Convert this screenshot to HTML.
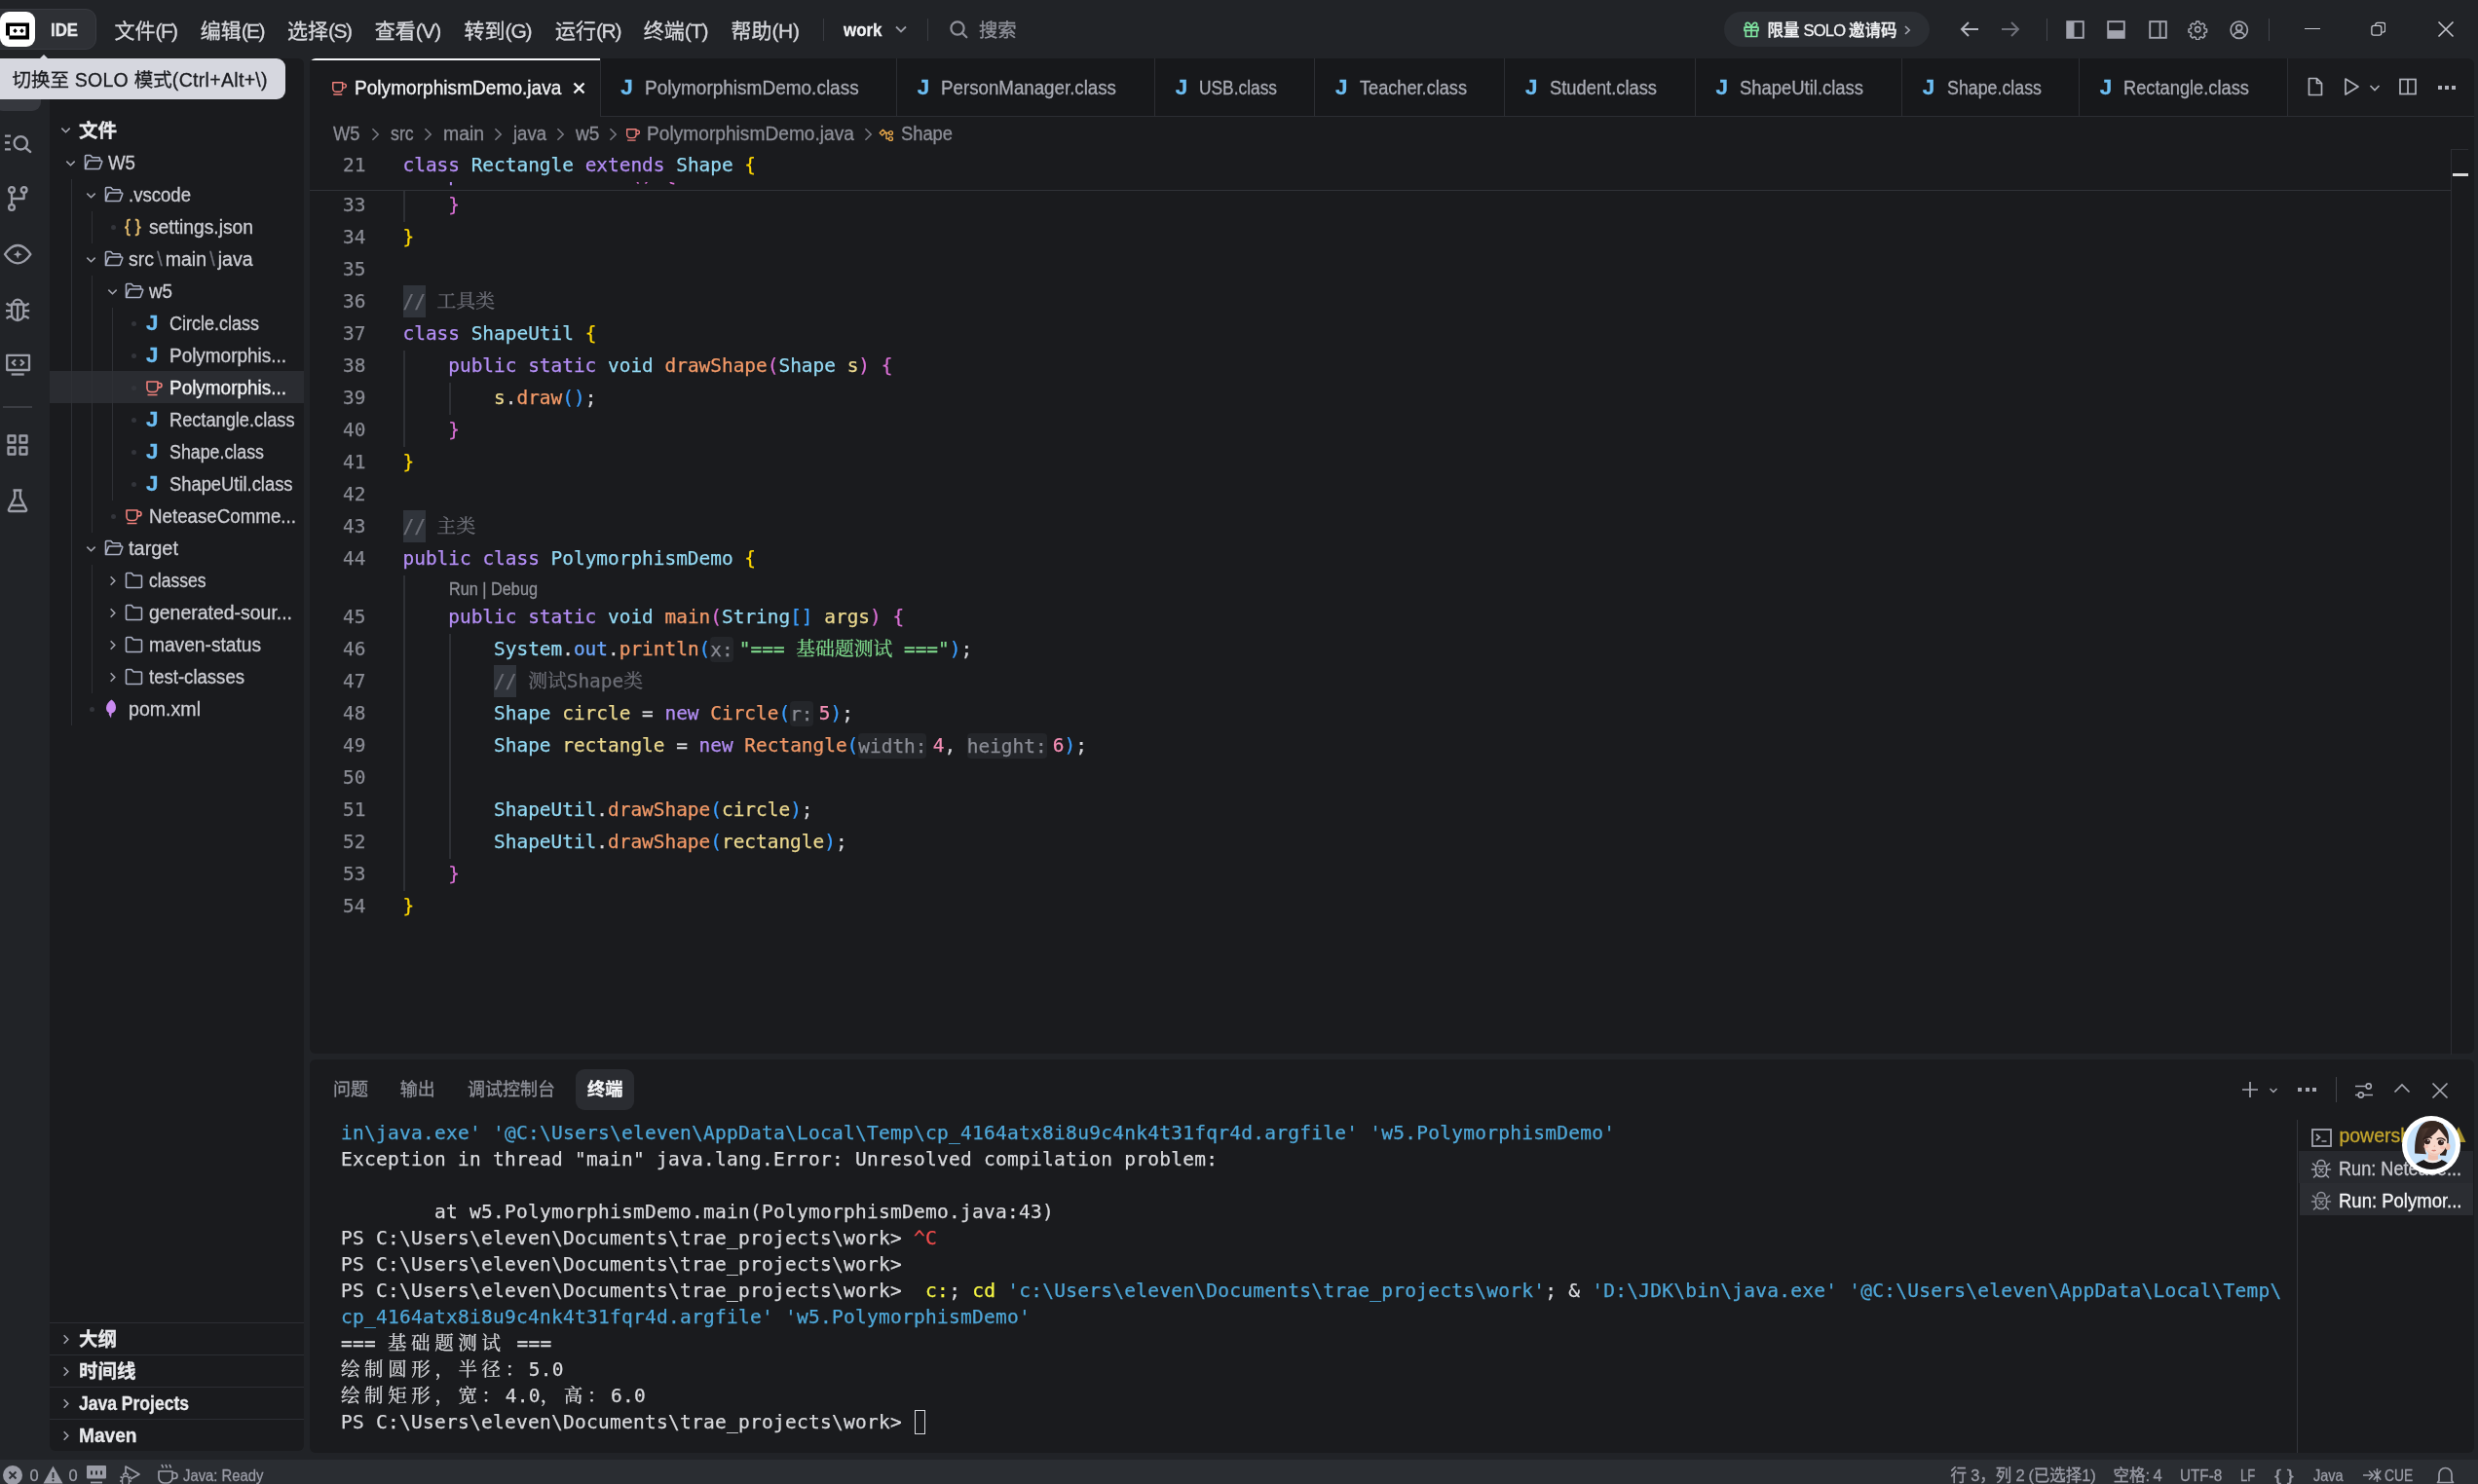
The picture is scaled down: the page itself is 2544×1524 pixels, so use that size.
<!DOCTYPE html>
<html lang="zh-CN"><head><meta charset="utf-8"><title>PolymorphismDemo.java - work - Trae</title>
<style>

html,body{margin:0;padding:0}
body{width:2544px;height:1524px;overflow:hidden;background:#212327;position:relative;
 font-family:"Liberation Sans","Noto Sans CJK SC",sans-serif;font-size:19.5px;color:#d2d3d9}
#root{position:absolute;left:0;top:0;width:2544px;height:1524px;overflow:hidden;will-change:transform}
.t{position:absolute;white-space:pre;display:block;-webkit-text-stroke:0.3px}
.b{font-weight:700}
.mono{font-family:"DejaVu Sans Mono","Liberation Mono","Noto Serif CJK SC",monospace}
.pane{position:absolute;background:#1a1b1e;border-radius:6px;overflow:hidden}
.hl{position:absolute;background:#2c2e33;height:1px}
.vl{position:absolute;background:#2c2e33;width:1px}
/* title */
.menu{color:#d6d7dc;font-size:21px}
.dim{color:#8e9099}
/* tree */
.tr{color:#cdced4}
.w{color:#f2f3f5}
.J{color:#6cbdf2;font-weight:700;font-size:22.5px}
.bs{color:#6f717a;margin:0 3.2px}
/* code colours */
.k{color:#b48ef5}.c{color:#93d9f3}.f{color:#f39a68}.v{color:#ebd88e}.s{color:#7fd98c}.n{color:#f48fb6}
.o{color:#d7d8dd}.m{color:#6d6f77}.b1{color:#ffd700}.b2{color:#da70d6}.b3{color:#3b9eff}.fl{color:#6ea8fe}
.ln{color:#8a8c95}
.cjk{font-family:"Noto Serif CJK SC",serif;line-height:0;font-size:19.8px}
.code{position:absolute;left:413.5px;white-space:pre;font-family:"DejaVu Sans Mono","Liberation Mono",monospace;font-size:19.43px;height:33px;line-height:33px;color:#d7d8dd;-webkit-text-stroke:0.25px}
.num{position:absolute;left:318px;width:57.5px;text-align:right;font-family:"DejaVu Sans Mono","Liberation Mono",monospace;font-size:19.43px;height:33px;line-height:33px;color:#8a8c95;-webkit-text-stroke:0.25px}
.hint{background:#24262a;color:#8a8c95;border-radius:4px;padding:1.7px 0;margin-right:6.2px}
.sel{background:#30343b;display:inline-block;height:33px;line-height:33px;vertical-align:top}
.term{position:absolute;left:350px;white-space:pre;font-family:"DejaVu Sans Mono","Liberation Mono",monospace;font-size:19.5px;letter-spacing:0.262px;height:27px;line-height:27px;color:#d9dade;-webkit-text-stroke:0.25px}
.tb{color:#4ea7d8}.ty{color:#f5f543}.tr2{color:#f14c4c}
.tc{font-family:"Noto Serif CJK SC",serif;letter-spacing:4.6px;line-height:0}

</style></head>
<body>
<div id="root">
<!-- title bar -->
<div class="" style="position:absolute;left:-12.0px;top:9.0px;width:111.0px;height:42.0px;background:#2e3035;border:1px solid #393b41;border-radius:11px;box-sizing:border-box"></div>
<div class="" style="position:absolute;left:0.0px;top:12.0px;width:36.0px;height:36.0px;background:#fff;border-radius:9px"></div>
<svg style="position:absolute;left:0.0px;top:12.0px;" width="36" height="36" viewBox="0 0 36 36" fill="none"><path fill-rule="evenodd" d="M6 11.600H30V28.500H9.400V24.600H6zM10 15H26.400V24.400H10z" fill="#000"/><path d="M15.500 17.300l2.300 2.400-2.300 2.400-2.300-2.400zM22.400 17.300l2.300 2.400-2.300 2.400-2.300-2.400z" fill="#000"/></svg>
<span id="t1" class="t b" style="left:52.0px;top:13.8px;height:34px;line-height:34px;transform:scaleX(0.9328);transform-origin:0 50%;color:#e8e9ec;font-size:18px">IDE</span>
<span id="t2" class="t menu" style="left:117.5px;top:15.3px;height:34px;line-height:34px;">文件<span style="letter-spacing:-1.609px">(F)</span></span>
<span id="t3" class="t menu" style="left:205.8px;top:15.3px;height:34px;line-height:34px;">编辑<span style="letter-spacing:-1.667px">(E)</span></span>
<span id="t4" class="t menu" style="left:295.0px;top:15.3px;height:34px;line-height:34px;">选择<span style="letter-spacing:-1.500px">(S)</span></span>
<span id="t5" class="t menu" style="left:384.8px;top:15.3px;height:34px;line-height:34px;">查看<span style="letter-spacing:-0.833px">(V)</span></span>
<span id="t6" class="t menu" style="left:476.5px;top:15.3px;height:34px;line-height:34px;">转到<span style="letter-spacing:-1.109px">(G)</span></span>
<span id="t7" class="t menu" style="left:570.0px;top:15.3px;height:34px;line-height:34px;">运行<span style="letter-spacing:-1.385px">(R)</span></span>
<span id="t8" class="t menu" style="left:660.7px;top:15.3px;height:34px;line-height:34px;">终端<span style="letter-spacing:-0.943px">(T)</span></span>
<span id="t9" class="t menu" style="left:750.5px;top:15.3px;height:34px;line-height:34px;">帮助<span style="letter-spacing:-0.385px">(H)</span></span>
<div class="" style="position:absolute;left:845.0px;top:19.0px;width:1.0px;height:23.0px;background:#3a3c42"></div>
<span id="t10" class="t b" style="left:865.5px;top:14.2px;height:34px;line-height:34px;transform:scaleX(0.9401);transform-origin:0 50%;color:#f0f1f3;font-size:18px">work</span>
<svg style="position:absolute;left:917.5px;top:23.0px;" width="14" height="14" viewBox="0 0 14 14" fill="none"><path d="M2 4.5l5 5 5-5" stroke="#9a9ca6" stroke-width="1.8"/></svg>
<div class="" style="position:absolute;left:952.0px;top:19.0px;width:1.0px;height:23.0px;background:#3a3c42"></div>
<svg style="position:absolute;left:974.0px;top:20.0px;" width="20" height="20" viewBox="0 0 20 20" fill="none"><circle cx="9" cy="9" r="6.6" stroke="#8e9099" stroke-width="2.2"/><path d="M14 14l4.3 4.3" stroke="#8e9099" stroke-width="2.2" stroke-linecap="round"/></svg>
<span id="t11" class="t dim" style="left:1005.0px;top:14.0px;height:34px;line-height:34px;transform:scaleX(0.9893);transform-origin:0 50%;font-size:19.5px">搜索</span>
<div class="" style="position:absolute;left:1770.0px;top:12.0px;width:211.0px;height:36.0px;background:#2b2e33;border-radius:18px"></div>
<svg style="position:absolute;left:1788.3px;top:20.0px;" width="20" height="20" viewBox="0 0 20 20" fill="none"><path d="M3 8.2h14v3.2H3zM4.3 11.4v6.1h11.4v-6.1M10 8.2v9.3" stroke="#7fe3a0" stroke-width="1.7" stroke-linejoin="round"/><path d="M10 8c-1-3-2.4-4.6-3.9-4.6-1.2 0-1.9.9-1.9 2 0 1.500 1.300 2.600 5.800 2.600zM10 8c1-3 2.4-4.6 3.900-4.600 1.200 0 1.900.9 1.900 2 0 1.500-1.300 2.600-5.800 2.600z" stroke="#7fe3a0" stroke-width="1.6"/></svg>
<span id="t12" class="t " style="left:1814.6px;top:14.2px;height:34px;line-height:34px;color:#f2f3f5;font-size:16.5px;font-weight:500">限量<span style="letter-spacing:-0.755px"> SOLO </span>邀请码</span>
<svg style="position:absolute;left:1952.0px;top:24.5px;" width="12" height="12" viewBox="0 0 12 12" fill="none"><path d="M4 2l4.2 4L4 10" stroke="#a2a4ae" stroke-width="1.7"/></svg>
<svg style="position:absolute;left:2010.0px;top:18.0px;" width="24" height="24" viewBox="0 0 24 24" fill="none"><path d="M21 12H4.5M11 5l-7 7 7 7" stroke="#b4b6bf" stroke-width="2"/></svg>
<svg style="position:absolute;left:2052.0px;top:18.0px;" width="24" height="24" viewBox="0 0 24 24" fill="none"><path d="M3 12h16.5M13 5l7 7-7 7" stroke="#6f717a" stroke-width="2"/></svg>
<div class="" style="position:absolute;left:2100.5px;top:18.5px;width:1.2px;height:23.0px;background:#43454c"></div>
<svg style="position:absolute;left:2121.0px;top:21.0px;" width="19" height="19" viewBox="0 0 19 19" fill="none"><rect x="1.2" y="1.2" width="16.600" height="16.600" stroke="#a2a4ae" stroke-width="1.9"/><rect x="1.2" y="1.2" width="7.3" height="16.600" fill="#a2a4ae"/></svg>
<svg style="position:absolute;left:2163.2px;top:21.0px;" width="19" height="19" viewBox="0 0 19 19" fill="none"><rect x="1.2" y="1.2" width="16.600" height="16.600" stroke="#a2a4ae" stroke-width="1.9"/><rect x="1.2" y="10.2" width="16.600" height="7.6" fill="#a2a4ae"/></svg>
<svg style="position:absolute;left:2205.5px;top:21.0px;" width="19" height="19" viewBox="0 0 19 19" fill="none"><rect x="1.2" y="1.2" width="16.600" height="16.600" stroke="#a2a4ae" stroke-width="1.9"/><path d="M11.600 1.2v16.600" stroke="#a2a4ae" stroke-width="1.9"/></svg>
<svg style="position:absolute;left:2246.2px;top:20.2px;" width="20.5" height="20.5" viewBox="0 0 24 24" fill="none"><circle cx="12" cy="12" r="3.1" stroke="#a2a4ae" stroke-width="1.9"/><path d="M10.3 2.5h3.4l.6 2.6 1.700.8 2.400-1.300 2.400 2.400-1.300 2.400.8 1.700 2.600.6v3.400l-2.600.6-.8 1.700 1.300 2.400-2.400 2.400-2.400-1.300-1.700.8-.6 2.600h-3.400l-.6-2.600-1.700-.8-2.400 1.300-2.400-2.400 1.300-2.400-.8-1.700-2.600-.6v-3.400l2.600-.6.8-1.700-1.300-2.400 2.400-2.400 2.400 1.300 1.700-.8z" stroke="#a2a4ae" stroke-width="1.8" stroke-linejoin="round"/></svg>
<svg style="position:absolute;left:2287.9px;top:19.8px;" width="21.5" height="21.5" viewBox="0 0 24 24" fill="none"><circle cx="12" cy="12" r="9.6" stroke="#a2a4ae" stroke-width="1.9"/><circle cx="12" cy="9.6" r="3.4" stroke="#a2a4ae" stroke-width="1.9"/><path d="M5.6 18.6c1.200-3 3.600-4.300 6.400-4.300s5.200 1.300 6.400 4.300" stroke="#a2a4ae" stroke-width="1.9"/></svg>
<div class="" style="position:absolute;left:2329.0px;top:18.5px;width:1.2px;height:23.0px;background:#43454c"></div>
<div class="" style="position:absolute;left:2365.5px;top:28.5px;width:16.0px;height:1.6px;background:#c4c6cd"></div>
<svg style="position:absolute;left:2433.8px;top:22.2px;" width="15.5" height="15.5" viewBox="0 0 18 18" fill="none"><rect x="1" y="5" width="11.500" height="11.500" rx="2.500" stroke="#c4c6cd" stroke-width="1.5"/><path d="M5.5 4.8V4a2.500 2.500 0 0 1 2.500-2.500h6.500a2.500 2.500 0 0 1 2.500 2.500v6.500a2.500 2.500 0 0 1-2.500 2.500h-1.300" stroke="#c4c6cd" stroke-width="1.5"/></svg>
<svg style="position:absolute;left:2502.0px;top:21.0px;" width="18" height="18" viewBox="0 0 18 18" fill="none"><path d="M1.5 1.500l15 15M16.500 1.500l-15 15" stroke="#c4c6cd" stroke-width="1.6"/></svg>
<!-- tooltip -->
<svg style="position:absolute;left:40.0px;top:55.5px;z-index:30" width="10" height="5" viewBox="0 0 10 5" fill="none"><path d="M0 5L5 0 10 5z" fill="#d6d7df"/></svg>
<div class="" style="position:absolute;left:-10.0px;top:60.0px;width:303.0px;height:42.0px;background:#d6d7df;border-radius:9px;z-index:30"></div>
<span id="t13" class="t " style="left:12.4px;top:64.5px;height:34px;line-height:34px;color:#1b1c20;z-index:31;font-size:19.5px">切换至<span style="letter-spacing:0.315px"> SOLO </span>模式<span style="letter-spacing:0.315px">(Ctrl+Alt+\)</span></span>
<!-- activity bar -->
<div class="" style="position:absolute;left:-6.0px;top:66.0px;width:48.0px;height:48.0px;background:#36383e;border-radius:9px"></div>
<svg style="position:absolute;left:3.0px;top:132.0px;" width="30" height="30" viewBox="0 0 30 30" fill="none"><path d="M2 7.600h6M2 14.500h5M2 21.300h6" stroke="#9c9ea8" stroke-width="2.3" stroke-linejoin="round"/><circle cx="18.300" cy="14.800" r="6.700" stroke="#9c9ea8" stroke-width="2.3" stroke-linejoin="round"/><path d="M23.200 19.800l5 4.200" stroke="#9c9ea8" stroke-width="2.3" stroke-linejoin="round" stroke-linecap="round"/></svg>
<svg style="position:absolute;left:3.0px;top:189.0px;" width="30" height="30" viewBox="0 0 30 30" fill="none"><circle cx="9" cy="6" r="2.900" stroke="#9c9ea8" stroke-width="2.3" stroke-linejoin="round"/><circle cx="21.600" cy="6" r="2.900" stroke="#9c9ea8" stroke-width="2.3" stroke-linejoin="round"/><circle cx="9" cy="24" r="2.900" stroke="#9c9ea8" stroke-width="2.3" stroke-linejoin="round"/><path d="M9 8.900v12.200M21.600 8.900V15H9" stroke="#9c9ea8" stroke-width="2.3" stroke-linejoin="round"/></svg>
<svg style="position:absolute;left:3.0px;top:246.0px;" width="30" height="30" viewBox="0 0 30 30" fill="none"><path d="M2 15.200C6 9.200 10.500 6 15.200 6s9.200 3.200 13.200 9.200c-4 6-8.500 9.200-13.200 9.200S6 21.200 2 15.200z" stroke="#9c9ea8" stroke-width="2.3" stroke-linejoin="round"/><path d="M15.200 10.700l1.300 3.200 3.200 1.300-3.200 1.300-1.300 3.200-1.300-3.200-3.200-1.300 3.200-1.300z" fill="#9c9ea8"/></svg>
<svg style="position:absolute;left:3.0px;top:303.0px;" width="30" height="30" viewBox="0 0 30 30" fill="none"><path d="M10.500 9.300a4.600 4.600 0 0 1 9.200 0M9 9.500h12.200v10.400a6.100 6.100 0 0 1-12.200 0zM15.100 9.500v16M3.500 8.500l2.700 1.800H9M3 16.200h6M3.500 24l2.700-1.800H9M26.700 8.500L24 10.300h-2.800M27.200 16.200h-6M26.700 24L24 22.200h-2.800" stroke="#9c9ea8" stroke-width="2.3" stroke-linejoin="round"/></svg>
<svg style="position:absolute;left:3.0px;top:360.0px;" width="30" height="30" viewBox="0 0 30 30" fill="none"><rect x="4.200" y="4.800" width="22.800" height="15.200" stroke="#9c9ea8" stroke-width="2.3" stroke-linejoin="round"/><path d="M8.700 24.500h13" stroke="#9c9ea8" stroke-width="2.3" stroke-linejoin="round"/><path d="M13 9.500l-3.300 3 3.300 3M18 9.500l3.300 3-3.300 3" stroke="#9c9ea8" stroke-width="2.3" stroke-linejoin="round"/></svg>
<div class="" style="position:absolute;left:3.0px;top:417.0px;width:30.0px;height:2.0px;background:#3b3d43"></div>
<svg style="position:absolute;left:3.0px;top:441.5px;" width="30" height="30" viewBox="0 0 30 30" fill="none"><rect x="5.500" y="5.500" width="7" height="7" stroke="#9c9ea8" stroke-width="2.3" stroke-linejoin="round"/><rect x="17.500" y="5.500" width="7" height="7" stroke="#9c9ea8" stroke-width="2.3" stroke-linejoin="round"/><rect x="5.500" y="17.500" width="7" height="7" stroke="#9c9ea8" stroke-width="2.3" stroke-linejoin="round"/><rect x="17.500" y="17.500" width="7" height="7" stroke="#9c9ea8" stroke-width="2.3" stroke-linejoin="round"/></svg>
<svg style="position:absolute;left:3.0px;top:498.5px;" width="30" height="30" viewBox="0 0 30 30" fill="none"><path d="M10.500 4.500h9M12.200 4.500v7.500L6 24c-.5 1 .1 2 1.200 2h15.600c1.100 0 1.700-1 1.200-2l-6.200-12V4.500M8.500 20h13" stroke="#9c9ea8" stroke-width="2.3" stroke-linejoin="round"/></svg>
<!-- sidebar -->
<div class="pane" style="left:51px;top:60px;width:261px;height:1429.5px"></div>
<svg style="position:absolute;left:61.0px;top:126.5px;" width="13" height="13" viewBox="0 0 14 14" fill="none"><path d="M2.500 5l4.500 4.500L11.500 5" stroke="#a4a6b0" stroke-width="1.6"/></svg>
<span id="t14" class="t b" style="left:81.0px;top:117.0px;height:34px;line-height:34px;transform:scaleX(0.9996);transform-origin:0 50%;color:#e9eaed;font-size:19.5px">文件</span>
<div class="" style="position:absolute;left:51.0px;top:381.0px;width:261.0px;height:33.0px;background:#2a2c31"></div>
<div class="" style="position:absolute;left:73.0px;top:183.5px;width:1.0px;height:561.0px;background:#2e3035"></div>
<div class="" style="position:absolute;left:94.0px;top:216.5px;width:1.0px;height:33.0px;background:#2e3035"></div>
<div class="" style="position:absolute;left:94.0px;top:282.5px;width:1.0px;height:264.0px;background:#2e3035"></div>
<div class="" style="position:absolute;left:115.0px;top:315.5px;width:1.0px;height:198.0px;background:#2e3035"></div>
<div class="" style="position:absolute;left:94.0px;top:579.5px;width:1.0px;height:132.0px;background:#2e3035"></div>
<svg style="position:absolute;left:66.3px;top:160.5px;" width="13" height="13" viewBox="0 0 14 14" fill="none"><path d="M2.500 5l4.500 4.500L11.500 5" stroke="#a4a6b0" stroke-width="1.6"/></svg>
<svg style="position:absolute;left:85.5px;top:158.0px;" width="20" height="18" viewBox="0 0 20 18" fill="none"><path d="M1.500 15.500V2.500c0-.6.400-1 1-1h4.300l2 2.300h6.700c.6 0 1 .4 1 1v2.200M1.500 15.500l2.800-7.600c.2-.5.600-.9 1.200-.9h12.300c.7 0 1.100.7.900 1.300l-2.400 6.400c-.2.500-.600.800-1.200.800z" stroke="#aab0c4" stroke-width="1.6" stroke-linejoin="round"/></svg>
<span id="t15" class="t tr" style="left:111.3px;top:150.0px;height:34px;line-height:34px;transform:scaleX(0.9573);transform-origin:0 50%;">W5</span>
<svg style="position:absolute;left:87.4px;top:193.5px;" width="13" height="13" viewBox="0 0 14 14" fill="none"><path d="M2.500 5l4.500 4.500L11.500 5" stroke="#a4a6b0" stroke-width="1.6"/></svg>
<svg style="position:absolute;left:106.5px;top:191.0px;" width="20" height="18" viewBox="0 0 20 18" fill="none"><path d="M1.500 15.500V2.500c0-.6.400-1 1-1h4.300l2 2.300h6.700c.6 0 1 .4 1 1v2.200M1.500 15.500l2.800-7.600c.2-.5.600-.9 1.200-.9h12.300c.7 0 1.100.7.900 1.300l-2.400 6.400c-.2.500-.600.800-1.200.800z" stroke="#aab0c4" stroke-width="1.6" stroke-linejoin="round"/></svg>
<span id="t16" class="t tr" style="left:132.2px;top:183.0px;height:34px;line-height:34px;transform:scaleX(0.9523);transform-origin:0 50%;">.vscode</span>
<div class="" style="position:absolute;left:113.5px;top:230.5px;width:5.0px;height:5.0px;background:#33353b;border-radius:50%"></div>
<span id="t17" class="t " style="left:128.0px;top:217.0px;height:30px;line-height:30px;color:#e5bd6e;font-size:17.5px;-webkit-text-stroke:0.5px">{ }</span>
<span id="t18" class="t tr" style="left:153.1px;top:216.0px;height:34px;line-height:34px;transform:scaleX(0.9870);transform-origin:0 50%;">settings.json</span>
<svg style="position:absolute;left:87.4px;top:259.5px;" width="13" height="13" viewBox="0 0 14 14" fill="none"><path d="M2.500 5l4.500 4.500L11.500 5" stroke="#a4a6b0" stroke-width="1.6"/></svg>
<svg style="position:absolute;left:106.5px;top:257.0px;" width="20" height="18" viewBox="0 0 20 18" fill="none"><path d="M1.500 15.500V2.500c0-.6.400-1 1-1h4.300l2 2.300h6.700c.6 0 1 .4 1 1v2.200M1.500 15.500l2.800-7.600c.2-.5.600-.9 1.200-.9h12.300c.7 0 1.100.7.900 1.300l-2.400 6.400c-.2.500-.600.800-1.200.800z" stroke="#aab0c4" stroke-width="1.6" stroke-linejoin="round"/></svg>
<span id="t19" class="t tr" style="left:132.2px;top:249.0px;height:34px;line-height:34px;transform:scaleX(0.9988);transform-origin:0 50%;">src<span class="bs">\</span>main<span class="bs">\</span>java</span>
<svg style="position:absolute;left:108.5px;top:292.5px;" width="13" height="13" viewBox="0 0 14 14" fill="none"><path d="M2.500 5l4.500 4.500L11.500 5" stroke="#a4a6b0" stroke-width="1.6"/></svg>
<svg style="position:absolute;left:127.5px;top:290.0px;" width="20" height="18" viewBox="0 0 20 18" fill="none"><path d="M1.500 15.500V2.500c0-.6.400-1 1-1h4.300l2 2.300h6.700c.6 0 1 .4 1 1v2.200M1.500 15.500l2.800-7.600c.2-.5.600-.9 1.200-.9h12.300c.7 0 1.100.7.900 1.300l-2.400 6.400c-.2.500-.600.800-1.200.800z" stroke="#aab0c4" stroke-width="1.6" stroke-linejoin="round"/></svg>
<span id="t20" class="t tr" style="left:153.1px;top:282.0px;height:34px;line-height:34px;transform:scaleX(0.9624);transform-origin:0 50%;">w5</span>
<div class="" style="position:absolute;left:134.6px;top:329.5px;width:5.0px;height:5.0px;background:#33353b;border-radius:50%"></div>
<span id="t21" class="t J" style="left:150.0px;top:317.0px;height:30px;line-height:30px;">J</span>
<span id="t22" class="t tr" style="left:174.0px;top:315.0px;height:34px;line-height:34px;transform:scaleX(0.9229);transform-origin:0 50%;">Circle.class</span>
<div class="" style="position:absolute;left:134.6px;top:362.5px;width:5.0px;height:5.0px;background:#33353b;border-radius:50%"></div>
<span id="t23" class="t J" style="left:150.0px;top:350.0px;height:30px;line-height:30px;">J</span>
<span id="t24" class="t tr" style="left:174.0px;top:348.0px;height:34px;line-height:34px;transform:scaleX(0.9713);transform-origin:0 50%;">Polymorphis...</span>
<div class="" style="position:absolute;left:134.6px;top:395.5px;width:5.0px;height:5.0px;background:#33353b;border-radius:50%"></div>
<svg style="position:absolute;left:149.0px;top:389.5px;" width="18" height="17" viewBox="0 0 18 17" fill="none"><path d="M2 2h11v6.500a4 4 0 0 1-4 4H6a4 4 0 0 1-4-4zM13 3.500h1.800a2.200 2.200 0 0 1 0 4.400H13M2.500 15.500h10" stroke="#f0817c" stroke-width="1.6" stroke-linejoin="round"/></svg>
<span id="t25" class="t w" style="left:174.0px;top:381.0px;height:34px;line-height:34px;transform:scaleX(0.9713);transform-origin:0 50%;">Polymorphis...</span>
<div class="" style="position:absolute;left:134.6px;top:428.5px;width:5.0px;height:5.0px;background:#33353b;border-radius:50%"></div>
<span id="t26" class="t J" style="left:150.0px;top:416.0px;height:30px;line-height:30px;">J</span>
<span id="t27" class="t tr" style="left:174.0px;top:414.0px;height:34px;line-height:34px;transform:scaleX(0.9335);transform-origin:0 50%;">Rectangle.class</span>
<div class="" style="position:absolute;left:134.6px;top:461.5px;width:5.0px;height:5.0px;background:#33353b;border-radius:50%"></div>
<span id="t28" class="t J" style="left:150.0px;top:449.0px;height:30px;line-height:30px;">J</span>
<span id="t29" class="t tr" style="left:174.0px;top:447.0px;height:34px;line-height:34px;transform:scaleX(0.9131);transform-origin:0 50%;">Shape.class</span>
<div class="" style="position:absolute;left:134.6px;top:494.5px;width:5.0px;height:5.0px;background:#33353b;border-radius:50%"></div>
<span id="t30" class="t J" style="left:150.0px;top:482.0px;height:30px;line-height:30px;">J</span>
<span id="t31" class="t tr" style="left:174.0px;top:480.0px;height:34px;line-height:34px;transform:scaleX(0.9412);transform-origin:0 50%;">ShapeUtil.class</span>
<div class="" style="position:absolute;left:113.5px;top:527.5px;width:5.0px;height:5.0px;background:#33353b;border-radius:50%"></div>
<svg style="position:absolute;left:128.0px;top:521.5px;" width="18" height="17" viewBox="0 0 18 17" fill="none"><path d="M2 2h11v6.500a4 4 0 0 1-4 4H6a4 4 0 0 1-4-4zM13 3.500h1.800a2.200 2.200 0 0 1 0 4.400H13M2.500 15.500h10" stroke="#f0817c" stroke-width="1.6" stroke-linejoin="round"/></svg>
<span id="t32" class="t tr" style="left:153.1px;top:513.0px;height:34px;line-height:34px;transform:scaleX(0.9608);transform-origin:0 50%;">NeteaseComme...</span>
<svg style="position:absolute;left:87.4px;top:556.5px;" width="13" height="13" viewBox="0 0 14 14" fill="none"><path d="M2.500 5l4.500 4.500L11.500 5" stroke="#a4a6b0" stroke-width="1.6"/></svg>
<svg style="position:absolute;left:106.5px;top:554.0px;" width="20" height="18" viewBox="0 0 20 18" fill="none"><path d="M1.500 15.500V2.500c0-.6.400-1 1-1h4.300l2 2.300h6.700c.6 0 1 .4 1 1v2.200M1.500 15.500l2.800-7.600c.2-.5.600-.9 1.200-.9h12.300c.7 0 1.100.7.900 1.300l-2.400 6.400c-.2.500-.600.800-1.200.800z" stroke="#aab0c4" stroke-width="1.6" stroke-linejoin="round"/></svg>
<span id="t33" class="t tr" style="left:132.2px;top:546.0px;height:34px;line-height:34px;transform:scaleX(1.0226);transform-origin:0 50%;">target</span>
<svg style="position:absolute;left:108.5px;top:589.5px;" width="13" height="13" viewBox="0 0 14 14" fill="none"><path d="M5 2.500L9.500 7 5 11.500" stroke="#a4a6b0" stroke-width="1.6"/></svg>
<svg style="position:absolute;left:127.5px;top:587.0px;" width="20" height="18" viewBox="0 0 20 18" fill="none"><path d="M1.500 15.500V2.500c0-.6.400-1 1-1h4.500l2 2.500h7.500c.6 0 1 .4 1 1v10.500c0 .6-.4 1-1 1h-14c-.6 0-1-.4-1-1z" stroke="#aab0c4" stroke-width="1.6" stroke-linejoin="round"/></svg>
<span id="t34" class="t tr" style="left:153.1px;top:579.0px;height:34px;line-height:34px;transform:scaleX(0.8996);transform-origin:0 50%;">classes</span>
<svg style="position:absolute;left:108.5px;top:622.5px;" width="13" height="13" viewBox="0 0 14 14" fill="none"><path d="M5 2.500L9.500 7 5 11.500" stroke="#a4a6b0" stroke-width="1.6"/></svg>
<svg style="position:absolute;left:127.5px;top:620.0px;" width="20" height="18" viewBox="0 0 20 18" fill="none"><path d="M1.500 15.500V2.500c0-.6.400-1 1-1h4.500l2 2.500h7.500c.6 0 1 .4 1 1v10.500c0 .6-.4 1-1 1h-14c-.6 0-1-.4-1-1z" stroke="#aab0c4" stroke-width="1.6" stroke-linejoin="round"/></svg>
<span id="t35" class="t tr" style="left:153.1px;top:612.0px;height:34px;line-height:34px;transform:scaleX(0.9970);transform-origin:0 50%;">generated-sour...</span>
<svg style="position:absolute;left:108.5px;top:655.5px;" width="13" height="13" viewBox="0 0 14 14" fill="none"><path d="M5 2.500L9.500 7 5 11.500" stroke="#a4a6b0" stroke-width="1.6"/></svg>
<svg style="position:absolute;left:127.5px;top:653.0px;" width="20" height="18" viewBox="0 0 20 18" fill="none"><path d="M1.500 15.500V2.500c0-.6.400-1 1-1h4.500l2 2.500h7.500c.6 0 1 .4 1 1v10.500c0 .6-.4 1-1 1h-14c-.6 0-1-.4-1-1z" stroke="#aab0c4" stroke-width="1.6" stroke-linejoin="round"/></svg>
<span id="t36" class="t tr" style="left:153.1px;top:645.0px;height:34px;line-height:34px;transform:scaleX(0.9824);transform-origin:0 50%;">maven-status</span>
<svg style="position:absolute;left:108.5px;top:688.5px;" width="13" height="13" viewBox="0 0 14 14" fill="none"><path d="M5 2.500L9.500 7 5 11.500" stroke="#a4a6b0" stroke-width="1.6"/></svg>
<svg style="position:absolute;left:127.5px;top:686.0px;" width="20" height="18" viewBox="0 0 20 18" fill="none"><path d="M1.500 15.500V2.500c0-.6.400-1 1-1h4.500l2 2.500h7.500c.6 0 1 .4 1 1v10.500c0 .6-.4 1-1 1h-14c-.6 0-1-.4-1-1z" stroke="#aab0c4" stroke-width="1.6" stroke-linejoin="round"/></svg>
<span id="t37" class="t tr" style="left:153.1px;top:678.0px;height:34px;line-height:34px;transform:scaleX(0.9519);transform-origin:0 50%;">test-classes</span>
<div class="" style="position:absolute;left:92.4px;top:725.5px;width:5.0px;height:5.0px;background:#33353b;border-radius:50%"></div>
<svg style="position:absolute;left:107.5px;top:718.0px;" width="12" height="20" viewBox="0 0 12 20" fill="none"><path d="M6.500.5C3.500 2.500 1 5.500 1 9c0 2.500 1.200 4.300 3 5l-.3 1.500L6 19.500l.6-5c2.600-.6 4.400-2.800 4.400-6C11 5 9 2 6.500.5z" fill="#c98af0"/></svg>
<span id="t38" class="t tr" style="left:132.2px;top:711.0px;height:34px;line-height:34px;transform:scaleX(1.0042);transform-origin:0 50%;">pom.xml</span>
<div class="" style="position:absolute;left:51.0px;top:1358.0px;width:261.0px;height:1.0px;background:#2c2e33"></div>
<svg style="position:absolute;left:61.0px;top:1369.0px;" width="13" height="13" viewBox="0 0 14 14" fill="none"><path d="M5 2.500L9.500 7 5 11.500" stroke="#a4a6b0" stroke-width="1.6"/></svg>
<span id="t39" class="t b" style="left:81.4px;top:1358.2px;height:34px;line-height:34px;transform:scaleX(0.9996);transform-origin:0 50%;color:#e9eaed">大纲</span>
<div class="" style="position:absolute;left:51.0px;top:1391.0px;width:261.0px;height:1.0px;background:#2c2e33"></div>
<svg style="position:absolute;left:61.0px;top:1402.0px;" width="13" height="13" viewBox="0 0 14 14" fill="none"><path d="M5 2.500L9.500 7 5 11.500" stroke="#a4a6b0" stroke-width="1.6"/></svg>
<span id="t40" class="t b" style="left:81.4px;top:1391.2px;height:34px;line-height:34px;transform:scaleX(0.9997);transform-origin:0 50%;color:#e9eaed">时间线</span>
<div class="" style="position:absolute;left:51.0px;top:1424.0px;width:261.0px;height:1.0px;background:#2c2e33"></div>
<svg style="position:absolute;left:61.0px;top:1435.0px;" width="13" height="13" viewBox="0 0 14 14" fill="none"><path d="M5 2.500L9.500 7 5 11.500" stroke="#a4a6b0" stroke-width="1.6"/></svg>
<span id="t41" class="t b" style="left:81.4px;top:1424.2px;height:34px;line-height:34px;transform:scaleX(0.8985);transform-origin:0 50%;color:#e9eaed">Java Projects</span>
<div class="" style="position:absolute;left:51.0px;top:1457.0px;width:261.0px;height:1.0px;background:#2c2e33"></div>
<svg style="position:absolute;left:61.0px;top:1468.0px;" width="13" height="13" viewBox="0 0 14 14" fill="none"><path d="M5 2.500L9.500 7 5 11.500" stroke="#a4a6b0" stroke-width="1.6"/></svg>
<span id="t42" class="t b" style="left:81.4px;top:1457.2px;height:34px;line-height:34px;transform:scaleX(0.9802);transform-origin:0 50%;color:#e9eaed">Maven</span>
<!-- editor -->
<div class="pane" style="left:318px;top:60px;width:2222px;height:1022px"><div style="position:absolute;left:298px;top:0;width:1732.4px;height:59px;background:#17181b"></div><div style="position:absolute;left:0;top:0;width:298px;height:59px;box-sizing:border-box;border-top:2.5px solid #f4f5f7"></div></div>
<div class="" style="position:absolute;left:616.0px;top:119.0px;width:1924.0px;height:1.0px;background:#2c2e33"></div>
<div class="" style="position:absolute;left:615.5px;top:60.0px;width:1.0px;height:59.0px;background:#2c2e33"></div>
<svg style="position:absolute;left:339.5px;top:82.8px;" width="16.2" height="15.3" viewBox="0 0 18 17" fill="none"><path d="M2 2h11v6.500a4 4 0 0 1-4 4H6a4 4 0 0 1-4-4zM13 3.500h1.800a2.200 2.200 0 0 1 0 4.400H13M2.500 15.500h10" stroke="#f0817c" stroke-width="1.6" stroke-linejoin="round"/></svg>
<span id="t43" class="t w" style="left:364.0px;top:72.5px;height:34px;line-height:34px;transform:scaleX(0.9799);transform-origin:0 50%;">PolymorphismDemo.java</span>
<svg style="position:absolute;left:588.2px;top:83.5px;" width="13" height="13" viewBox="0 0 13 13" fill="none"><path d="M1.500 1.500l10 10M11.500 1.500l-10 10" stroke="#f2f3f5" stroke-width="2.400"/></svg>
<div class="" style="position:absolute;left:919.9px;top:60.0px;width:1.0px;height:59.0px;background:#2c2e33"></div>
<span id="t44" class="t J" style="left:637.3px;top:74.5px;height:30px;line-height:30px;">J</span>
<span id="t45" class="t " style="left:662.0px;top:72.5px;height:34px;line-height:34px;transform:scaleX(0.9747);transform-origin:0 50%;color:#a9abb4">PolymorphismDemo.class</span>
<div class="" style="position:absolute;left:1184.9px;top:60.0px;width:1.0px;height:59.0px;background:#2c2e33"></div>
<span id="t46" class="t J" style="left:941.7px;top:74.5px;height:30px;line-height:30px;">J</span>
<span id="t47" class="t " style="left:966.4px;top:72.5px;height:34px;line-height:34px;transform:scaleX(0.9598);transform-origin:0 50%;color:#a9abb4">PersonManager.class</span>
<div class="" style="position:absolute;left:1349.2px;top:60.0px;width:1.0px;height:59.0px;background:#2c2e33"></div>
<span id="t48" class="t J" style="left:1206.7px;top:74.5px;height:30px;line-height:30px;">J</span>
<span id="t49" class="t " style="left:1231.4px;top:72.5px;height:34px;line-height:34px;transform:scaleX(0.8894);transform-origin:0 50%;color:#a9abb4">USB.class</span>
<div class="" style="position:absolute;left:1544.3px;top:60.0px;width:1.0px;height:59.0px;background:#2c2e33"></div>
<span id="t50" class="t J" style="left:1371.0px;top:74.5px;height:30px;line-height:30px;">J</span>
<span id="t51" class="t " style="left:1395.7px;top:72.5px;height:34px;line-height:34px;transform:scaleX(0.9310);transform-origin:0 50%;color:#a9abb4">Teacher.class</span>
<div class="" style="position:absolute;left:1739.7px;top:60.0px;width:1.0px;height:59.0px;background:#2c2e33"></div>
<span id="t52" class="t J" style="left:1566.1px;top:74.5px;height:30px;line-height:30px;">J</span>
<span id="t53" class="t " style="left:1590.8px;top:72.5px;height:34px;line-height:34px;transform:scaleX(0.9395);transform-origin:0 50%;color:#a9abb4">Student.class</span>
<div class="" style="position:absolute;left:1952.0px;top:60.0px;width:1.0px;height:59.0px;background:#2c2e33"></div>
<span id="t54" class="t J" style="left:1761.5px;top:74.5px;height:30px;line-height:30px;">J</span>
<span id="t55" class="t " style="left:1786.2px;top:72.5px;height:34px;line-height:34px;transform:scaleX(0.9449);transform-origin:0 50%;color:#a9abb4">ShapeUtil.class</span>
<div class="" style="position:absolute;left:2133.9px;top:60.0px;width:1.0px;height:59.0px;background:#2c2e33"></div>
<span id="t56" class="t J" style="left:1973.8px;top:74.5px;height:30px;line-height:30px;">J</span>
<span id="t57" class="t " style="left:1998.5px;top:72.5px;height:34px;line-height:34px;transform:scaleX(0.9131);transform-origin:0 50%;color:#a9abb4">Shape.class</span>
<div class="" style="position:absolute;left:2347.9px;top:60.0px;width:1.0px;height:59.0px;background:#2c2e33"></div>
<span id="t58" class="t J" style="left:2155.7px;top:74.5px;height:30px;line-height:30px;">J</span>
<span id="t59" class="t " style="left:2180.4px;top:72.5px;height:34px;line-height:34px;transform:scaleX(0.9371);transform-origin:0 50%;color:#a9abb4">Rectangle.class</span>
<svg style="position:absolute;left:2366.0px;top:78.0px;" width="22" height="22" viewBox="0 0 22 22" fill="none"><path d="M4.500 2.500h8l5 5v12h-13zM12.500 2.500v5h5" stroke="#b0b2bb" stroke-width="1.7" stroke-linejoin="round"/></svg>
<svg style="position:absolute;left:2403.0px;top:78.0px;" width="22" height="22" viewBox="0 0 22 22" fill="none"><path d="M5 3l13 8-13 8z" stroke="#b0b2bb" stroke-width="1.700" stroke-linejoin="round"/></svg>
<svg style="position:absolute;left:2430.6px;top:83.0px;" width="14" height="14" viewBox="0 0 14 14" fill="none"><path d="M2.500 5l4.500 4.500L11.500 5" stroke="#b0b2bb" stroke-width="1.6"/></svg>
<svg style="position:absolute;left:2461.7px;top:79.0px;" width="20" height="20" viewBox="0 0 20 20" fill="none"><rect x="2" y="2.500" width="16" height="15" stroke="#b0b2bb" stroke-width="1.700"/><path d="M10 2.500v15" stroke="#b0b2bb" stroke-width="1.700"/></svg>
<div class="" style="position:absolute;left:2502.5px;top:87.5px;width:4.0px;height:4.0px;background:#b0b2bb"></div>
<div class="" style="position:absolute;left:2509.5px;top:87.5px;width:4.0px;height:4.0px;background:#b0b2bb"></div>
<div class="" style="position:absolute;left:2516.5px;top:87.5px;width:4.0px;height:4.0px;background:#b0b2bb"></div>
<span id="t60" class="t " style="left:342.3px;top:120.0px;height:34px;line-height:34px;transform:scaleX(0.9402);transform-origin:0 50%;color:#8c8e97">W5</span>
<span id="t61" class="t " style="left:401.0px;top:120.0px;height:34px;line-height:34px;transform:scaleX(0.9115);transform-origin:0 50%;color:#8c8e97">src</span>
<span id="t62" class="t " style="left:454.8px;top:120.0px;height:34px;line-height:34px;transform:scaleX(0.9981);transform-origin:0 50%;color:#8c8e97">main</span>
<span id="t63" class="t " style="left:527.0px;top:120.0px;height:34px;line-height:34px;transform:scaleX(0.9502);transform-origin:0 50%;color:#8c8e97">java</span>
<span id="t64" class="t " style="left:591.0px;top:120.0px;height:34px;line-height:34px;transform:scaleX(0.9825);transform-origin:0 50%;color:#8c8e97">w5</span>
<svg style="position:absolute;left:375.5px;top:128.5px;" width="18" height="18" viewBox="0 0 14 14" fill="none"><path d="M5 2.500L9.500 7 5 11.500" stroke="#7a7c85" stroke-width="1.200"/></svg>
<svg style="position:absolute;left:429.5px;top:128.5px;" width="18" height="18" viewBox="0 0 14 14" fill="none"><path d="M5 2.500L9.500 7 5 11.500" stroke="#7a7c85" stroke-width="1.200"/></svg>
<svg style="position:absolute;left:502.0px;top:128.5px;" width="18" height="18" viewBox="0 0 14 14" fill="none"><path d="M5 2.500L9.500 7 5 11.500" stroke="#7a7c85" stroke-width="1.200"/></svg>
<svg style="position:absolute;left:566.0px;top:128.5px;" width="18" height="18" viewBox="0 0 14 14" fill="none"><path d="M5 2.500L9.500 7 5 11.500" stroke="#7a7c85" stroke-width="1.200"/></svg>
<svg style="position:absolute;left:619.5px;top:128.5px;" width="18" height="18" viewBox="0 0 14 14" fill="none"><path d="M5 2.500L9.500 7 5 11.500" stroke="#7a7c85" stroke-width="1.200"/></svg>
<svg style="position:absolute;left:881.5px;top:128.5px;" width="18" height="18" viewBox="0 0 14 14" fill="none"><path d="M5 2.500L9.500 7 5 11.500" stroke="#7a7c85" stroke-width="1.200"/></svg>
<svg style="position:absolute;left:642.0px;top:131.3px;" width="15.3" height="14.45" viewBox="0 0 18 17" fill="none"><path d="M2 2h11v6.500a4 4 0 0 1-4 4H6a4 4 0 0 1-4-4zM13 3.500h1.800a2.200 2.200 0 0 1 0 4.400H13M2.500 15.500h10" stroke="#f0817c" stroke-width="1.6" stroke-linejoin="round"/></svg>
<span id="t65" class="t " style="left:664.0px;top:120.0px;height:34px;line-height:34px;transform:scaleX(0.9827);transform-origin:0 50%;color:#8c8e97">PolymorphismDemo.java</span>
<svg style="position:absolute;left:901.5px;top:129.5px;" width="17" height="16" viewBox="0 0 17 16" fill="none"><path d="M1.200 6.500l3.300-3.300 2.500 2.500-3.300 3.300zM6 6.500h4.500M8 6.500v6h2.500" stroke="#e5a54a" stroke-width="1.400" stroke-linejoin="round"/><circle cx="12.500" cy="6.500" r="1.900" stroke="#e5a54a" stroke-width="1.400"/><circle cx="12.500" cy="12.500" r="1.900" stroke="#e5a54a" stroke-width="1.400"/></svg>
<span id="t66" class="t " style="left:925.0px;top:120.0px;height:34px;line-height:34px;transform:scaleX(0.9399);transform-origin:0 50%;color:#8c8e97">Shape</span>
<div class="" style="position:absolute;left:414.0px;top:196.0px;width:1.5px;height:32.0px;background:#2e3035"></div>
<div class="" style="position:absolute;left:414.0px;top:359.5px;width:1.5px;height:99.0px;background:#2e3035"></div>
<div class="" style="position:absolute;left:461.0px;top:392.5px;width:1.5px;height:33.0px;background:#2e3035"></div>
<div class="" style="position:absolute;left:414.0px;top:590.5px;width:1.5px;height:324.5px;background:#2e3035"></div>
<div class="" style="position:absolute;left:461.0px;top:651.0px;width:1.5px;height:231.0px;background:#2e3035"></div>
<div class="num" style="top:193.8px">33</div>
<div class="code" style="top:193.8px">    <span class="b2">}</span></div>
<div class="num" style="top:226.8px">34</div>
<div class="code" style="top:226.8px"><span class="b1">}</span></div>
<div class="num" style="top:259.8px">35</div>
<div class="num" style="top:292.8px">36</div>
<div class="code" style="top:292.8px"><span class="m"><span class="sel">//</span> <span class="cjk">工具类</span></span></div>
<div class="num" style="top:325.8px">37</div>
<div class="code" style="top:325.8px"><span class="k">class</span> <span class="c">ShapeUtil</span> <span class="b1">{</span></div>
<div class="num" style="top:358.8px">38</div>
<div class="code" style="top:358.8px">    <span class="k">public</span> <span class="k">static</span> <span class="c">void</span> <span class="f">drawShape</span><span class="b2">(</span><span class="c">Shape</span> <span class="v">s</span><span class="b2">)</span> <span class="b2">{</span></div>
<div class="num" style="top:391.8px">39</div>
<div class="code" style="top:391.8px">        <span class="v">s</span>.<span class="f">draw</span><span class="b3">()</span>;</div>
<div class="num" style="top:424.8px">40</div>
<div class="code" style="top:424.8px">    <span class="b2">}</span></div>
<div class="num" style="top:457.8px">41</div>
<div class="code" style="top:457.8px"><span class="b1">}</span></div>
<div class="num" style="top:490.8px">42</div>
<div class="num" style="top:523.8px">43</div>
<div class="code" style="top:523.8px"><span class="m"><span class="sel">//</span> <span class="cjk">主类</span></span></div>
<div class="num" style="top:556.8px">44</div>
<div class="code" style="top:556.8px"><span class="k">public</span> <span class="k">class</span> <span class="c">PolymorphismDemo</span> <span class="b1">{</span></div>
<div class="num" style="top:617.3px">45</div>
<div class="code" style="top:617.3px">    <span class="k">public</span> <span class="k">static</span> <span class="c">void</span> <span class="f">main</span><span class="b2">(</span><span class="c">String</span><span class="b3">[]</span> <span class="v">args</span><span class="b2">)</span> <span class="b2">{</span></div>
<div class="num" style="top:650.3px">46</div>
<div class="code" style="top:650.3px">        <span class="c">System</span>.<span class="fl">out</span>.<span class="f">println</span><span class="b3">(</span><span class="hint">x:</span><span class="s">"=== </span><span class="s cjk">基础题测试</span><span class="s"> ==="</span><span class="b3">)</span>;</div>
<div class="num" style="top:683.3px">47</div>
<div class="code" style="top:683.3px">        <span class="m"><span class="sel">//</span> <span class="cjk">测试</span>Shape<span class="cjk">类</span></span></div>
<div class="num" style="top:716.3px">48</div>
<div class="code" style="top:716.3px">        <span class="c">Shape</span> <span class="v">circle</span> = <span class="k">new</span> <span class="f">Circle</span><span class="b3">(</span><span class="hint">r:</span><span class="n">5</span><span class="b3">)</span>;</div>
<div class="num" style="top:749.3px">49</div>
<div class="code" style="top:749.3px">        <span class="c">Shape</span> <span class="v">rectangle</span> = <span class="k">new</span> <span class="f">Rectangle</span><span class="b3">(</span><span class="hint">width:</span><span class="n">4</span>, <span class="hint">height:</span><span class="n">6</span><span class="b3">)</span>;</div>
<div class="num" style="top:782.3px">50</div>
<div class="num" style="top:815.3px">51</div>
<div class="code" style="top:815.3px">        <span class="c">ShapeUtil</span>.<span class="f">drawShape</span><span class="b3">(</span><span class="v">circle</span><span class="b3">)</span>;</div>
<div class="num" style="top:848.3px">52</div>
<div class="code" style="top:848.3px">        <span class="c">ShapeUtil</span>.<span class="f">drawShape</span><span class="b3">(</span><span class="v">rectangle</span><span class="b3">)</span>;</div>
<div class="num" style="top:881.3px">53</div>
<div class="code" style="top:881.3px">    <span class="b2">}</span></div>
<div class="num" style="top:914.3px">54</div>
<div class="code" style="top:914.3px"><span class="b1">}</span></div>
<span id="t67" class="t " style="left:460.5px;top:592.4px;height:26px;line-height:26px;transform:scaleX(0.9290);transform-origin:0 50%;color:#8f9199;font-size:17.5px">Run | Debug</span>
<div class="" style="position:absolute;left:318.0px;top:153.5px;width:2198.0px;height:42.0px;background:#1a1b1e;overflow:hidden"><div class="code" style="left:95.5px;top:9px">    <span class="k">public</span> <span class="c">void</span> <span class="f">draw</span><span class="b2">()</span> <span class="b2">{</span></div><div style="position:absolute;left:0;top:0;width:2198px;height:33px;background:#1a1b1e"></div><div class="num" style="left:0;top:-0.5px">21</div><div class="code" style="left:95.5px;top:-0.5px"><span class="k">class</span> <span class="c">Rectangle</span> <span class="k">extends</span> <span class="c">Shape</span> <span class="b1">{</span></div></div>
<div class="" style="position:absolute;left:318.0px;top:195.0px;width:2198.0px;height:1.0px;background:#303237"></div>
<div class="" style="position:absolute;left:2516.0px;top:153.5px;width:1.0px;height:929.0px;background:#2c2e33"></div>
<div class="" style="position:absolute;left:2516.0px;top:153.0px;width:18.0px;height:1.0px;background:#2c2e33"></div>
<div class="" style="position:absolute;left:2517.5px;top:178.0px;width:16.5px;height:3.0px;background:#d9d9d9"></div>
<!-- panel -->
<div class="pane" style="left:318px;top:1088px;width:2222px;height:403.5px"></div>
<span id="t68" class="t " style="left:342.0px;top:1101.5px;height:34px;line-height:34px;transform:scaleX(1.0000);transform-origin:0 50%;color:#8e9099;font-size:18px">问题</span>
<span id="t69" class="t " style="left:410.7px;top:1101.5px;height:34px;line-height:34px;transform:scaleX(1.0000);transform-origin:0 50%;color:#8e9099;font-size:18px">输出</span>
<span id="t70" class="t " style="left:480.0px;top:1101.5px;height:34px;line-height:34px;transform:scaleX(1.0000);transform-origin:0 50%;color:#8e9099;font-size:18px">调试控制台</span>
<div class="" style="position:absolute;left:590.7px;top:1098.0px;width:60.6px;height:42.0px;background:#2a2c31;border-radius:9px"></div>
<span id="t71" class="t b" style="left:602.5px;top:1101.5px;height:34px;line-height:34px;transform:scaleX(1.0139);transform-origin:0 50%;color:#f4f5f7;font-size:18px">终端</span>
<svg style="position:absolute;left:2301.0px;top:1110.0px;" width="18" height="18" viewBox="0 0 18 18" fill="none"><path d="M9 1v16M1 9h16" stroke="#a6a8b2" stroke-width="1.700"/></svg>
<svg style="position:absolute;left:2329.0px;top:1114.5px;" width="10" height="10" viewBox="0 0 10 10" fill="none"><path d="M1.500 3l3.500 3.500L8.500 3" stroke="#a6a8b2" stroke-width="1.400"/></svg>
<div class="" style="position:absolute;left:2359.3px;top:1117.0px;width:4.2px;height:4.2px;background:#a6a8b2"></div>
<div class="" style="position:absolute;left:2366.7px;top:1117.0px;width:4.2px;height:4.2px;background:#a6a8b2"></div>
<div class="" style="position:absolute;left:2374.1px;top:1117.0px;width:4.2px;height:4.2px;background:#a6a8b2"></div>
<div class="" style="position:absolute;left:2397.5px;top:1105.5px;width:1.2px;height:26.5px;background:#43454c"></div>
<svg style="position:absolute;left:2417.0px;top:1109.5px;" width="20" height="20" viewBox="0 0 20 20" fill="none"><path d="M1 5.500h11M1 14.500h3.500M9.500 14.500H19" stroke="#a6a8b2" stroke-width="1.600"/><circle cx="14.700" cy="5.500" r="2.600" stroke="#a6a8b2" stroke-width="1.600"/><circle cx="6.800" cy="14.500" r="2.600" stroke="#a6a8b2" stroke-width="1.600"/></svg>
<svg style="position:absolute;left:2457.0px;top:1108.5px;" width="18" height="18" viewBox="0 0 18 18" fill="none"><path d="M1.500 12.500L9 5l7.500 7.500" stroke="#a6a8b2" stroke-width="1.700"/></svg>
<svg style="position:absolute;left:2496.0px;top:1110.5px;" width="18" height="18" viewBox="0 0 18 18" fill="none"><path d="M1.500 1.500l15 15M16.500 1.500l-15 15" stroke="#a6a8b2" stroke-width="1.700"/></svg>
<div class="term" style="top:1149.5px"><span class="tb">in\java.exe' '@C:\Users\eleven\AppData\Local\Temp\cp_4164atx8i8u9c4nk4t31fqr4d.argfile' 'w5.PolymorphismDemo'</span></div>
<div class="term" style="top:1176.5px">Exception in thread "main" java.lang.Error: Unresolved compilation problem: </div>
<div class="term" style="top:1230.5px">        at w5.PolymorphismDemo.main(PolymorphismDemo.java:43)</div>
<div class="term" style="top:1257.5px">PS C:\Users\eleven\Documents\trae_projects\work&gt; <span class="tr2">^C</span></div>
<div class="term" style="top:1284.5px">PS C:\Users\eleven\Documents\trae_projects\work&gt;</div>
<div class="term" style="top:1311.5px">PS C:\Users\eleven\Documents\trae_projects\work&gt;  <span class="ty">c:</span>; <span class="ty">cd</span> <span class="tb">'c:\Users\eleven\Documents\trae_projects\work'</span>; &amp; <span class="tb">'D:\JDK\bin\java.exe'</span> <span class="tb">'@C:\Users\eleven\AppData\Local\Temp\</span></div>
<div class="term" style="top:1338.5px"><span class="tb">cp_4164atx8i8u9c4nk4t31fqr4d.argfile' 'w5.PolymorphismDemo'</span></div>
<div class="term" style="top:1365.5px">=== <span class="tc">基础题测试</span> ===</div>
<div class="term" style="top:1392.5px"><span class="tc">绘制圆形，半径：</span>5.0</div>
<div class="term" style="top:1419.5px"><span class="tc">绘制矩形，宽：</span>4.0<span class="tc">，高：</span>6.0</div>
<div class="term" style="top:1446.5px">PS C:\Users\eleven\Documents\trae_projects\work&gt; </div>
<div class="" style="position:absolute;left:938.5px;top:1447.5px;width:11.5px;height:25.0px;border:1.500px solid #d9dade;box-sizing:border-box"></div>
<div class="" style="position:absolute;left:2358.3px;top:1149.5px;width:1.0px;height:342.0px;background:#34363c"></div>
<div class="" style="position:absolute;left:2359.5px;top:1182.0px;width:179.0px;height:33.0px;background:#27292e"></div>
<div class="" style="position:absolute;left:2361.0px;top:1215.0px;width:177.5px;height:33.0px;background:#2b2d32"></div>
<svg style="position:absolute;left:2372.5px;top:1158.5px;" width="21" height="19" viewBox="0 0 21 19" fill="none"><rect x="1" y="1" width="19" height="17" stroke="#a2a4ae" stroke-width="1.800"/><path d="M5 6l3.500 3-3.500 3M10.500 13h5" stroke="#a2a4ae" stroke-width="1.700"/></svg>
<span id="t72" class="t " style="left:2401.4px;top:1149.0px;height:34px;line-height:34px;color:#c4a62d">powershell</span>
<svg style="position:absolute;left:2515.5px;top:1155.5px;" width="16" height="18" viewBox="0 0 16 18" fill="none"><path d="M8 1L15.500 17H.5z" fill="#a8922c"/></svg>
<svg style="position:absolute;left:2372.0px;top:1189.0px;" width="22" height="22" viewBox="0 0 22 22" fill="none"><path d="M7 6.500a4 4 0 0 1 8 0M5.500 8.500h11v5.500a5.500 5.500 0 0 1-11 0zM1.500 12h4M16.500 12h4M2.500 6l3 2.500M19.500 6l-3 2.500M3.500 20l3-3M18.500 20l-3-3M9 11l4 4M13 11l-4 4" stroke="#a2a4ae" stroke-width="1.600" stroke-linecap="round" stroke-linejoin="round"/></svg>
<svg style="position:absolute;left:2372.0px;top:1222.0px;" width="22" height="22" viewBox="0 0 22 22" fill="none"><path d="M7 6.500a4 4 0 0 1 8 0M5.500 8.500h11v5.500a5.500 5.500 0 0 1-11 0zM1.500 12h4M16.500 12h4M2.500 6l3 2.500M19.500 6l-3 2.500M3.500 20l3-3M18.500 20l-3-3M9 11l4 4M13 11l-4 4" stroke="#8e9099" stroke-width="1.600" stroke-linecap="round" stroke-linejoin="round"/></svg>
<span id="t73" class="t " style="left:2401.4px;top:1182.5px;height:34px;line-height:34px;transform:scaleX(0.9299);transform-origin:0 50%;color:#c9cad0">Run: Netease...</span>
<span id="t74" class="t " style="left:2401.4px;top:1215.5px;height:34px;line-height:34px;transform:scaleX(0.9489);transform-origin:0 50%;color:#f4f5f7">Run: Polymor...</span>
<svg style="position:absolute;left:2466.0px;top:1146.0px;z-index:20" width="60" height="60" viewBox="0 0 60 60" fill="none"><defs><clipPath id="avc"><circle cx="30" cy="30" r="25"/></clipPath><linearGradient id="hg" x1="0" y1="0" x2="1" y2="0"><stop offset="0" stop-color="#2f221e"/><stop offset=".45" stop-color="#4a372f"/><stop offset="1" stop-color="#33251f"/></linearGradient></defs><circle cx="30" cy="30" r="30" fill="#fff"/><g clip-path="url(#avc)"><rect x="0" y="0" width="60" height="60" fill="#c6e2fb"/><path d="M30 5c9 0 16 6 17.500 14 .800 4 .400 8.500-.300 12l-2.200 9.700-6-.200V20z" fill="#2e211d"/><path d="M27.200 36h9.300l.500 8.500c-3 2.600-7.500 2.600-10.500 0z" fill="#eebfae"/><path d="M8 60c1-8 7-12.500 15-15 4.500 3.800 13 3.800 17.500 0 7 2.500 11 7 12 15z" fill="#1d1b1c"/><path d="M22.800 45.200c4.500 4 13 4 17.700-.100l-1.200-1.500c-4 3-11 3-15.200 0z" fill="#f3ece9"/><ellipse cx="47" cy="31.500" rx="2.600" ry="3.600" fill="#f1c0ad"/><path d="M21.300 25c0-7 5-12.300 12.700-12.300 7.300 0 12.300 5.300 12.300 12.800 0 8.500-6 15.300-13 15.300-6.500 0-12-7-12-15.800z" fill="#f7d8cb"/><path d="M24 33c2.500 4.500 6 7.800 9.300 7.800 3.400 0 7-2.600 9.800-7.300-2.300 3.200-6 5.300-9.600 5.300-3.400 0-7-2.500-9.500-5.800z" fill="#edbfae" opacity=".7"/><path d="M13.200 38.600C12.600 26 15 12.500 22 7.500 26 4.200 33 3.500 38.500 6.200c-6 2-11.500 8-14.300 14.500-1.700 4-1.900 12.500.800 18.600z" fill="url(#hg)"/><path d="M20 13C24 5.500 35 2.500 42 8.500l4.500 10-9-5.500-9-1z" fill="#36271f"/><path d="M37.800 13c-3.500 5.500-9.500 9.800-16 11.800.500-5 3.500-10 7.500-13 2.500-1.700 6-2 8.500 1.200z" fill="#3a2a25"/><path d="M37.300 12.600c2.800 3.500 6 7.500 9.400 11.900.700-5-1-10.500-4.500-14-2.500-2.500-5.500-1.500-4.900 2.100z" fill="#33251f"/><path d="M22 23.800c2.200-2.300 5.600-2.700 8.200-1" stroke="#2a1c19" stroke-width="1.300" stroke-linecap="round"/><path d="M36.200 23.800c2.400-1.700 6-1.200 8 1.200" stroke="#2a1c19" stroke-width="1.300" stroke-linecap="round"/><ellipse cx="25.900" cy="26.300" rx="3" ry="2.900" fill="#35221f"/><ellipse cx="39.900" cy="27.300" rx="3" ry="2.900" fill="#35221f"/><circle cx="26.900" cy="25.300" r=".800" fill="#fff" opacity=".85"/><circle cx="40.900" cy="26.300" r=".800" fill="#fff" opacity=".85"/><ellipse cx="24.500" cy="31.500" rx="2.800" ry="1.700" fill="#f2aea3" opacity=".55"/><ellipse cx="41.500" cy="32.500" rx="2.800" ry="1.700" fill="#f2aea3" opacity=".55"/><path d="M33.200 29.500l1.200 2.300-1.800.300z" fill="#e9b29f"/><path d="M30.200 35.300c1-.900 1.900-.700 2.500-.200.600-.500 1.600-.700 2.500.200-.700 1.500-4.200 1.500-5 0z" fill="#d47f73"/></g></svg>
<!-- status bar -->
<div class="" style="position:absolute;left:0.0px;top:1499.0px;width:2544.0px;height:33.0px;background:#2a2d32"></div>
<svg style="position:absolute;left:3.4px;top:1505.0px;" width="20" height="20" viewBox="0 0 20 20" fill="none"><circle cx="10" cy="10" r="10" fill="#9a9ca6"/><path d="M6.500 6.500l7 7M13.500 6.500l-7 7" stroke="#2a2d32" stroke-width="1.900"/></svg>
<span id="t75" class="t " style="left:30.5px;top:1498.0px;height:34px;line-height:34px;color:#9a9ca6;font-size:16.5px">0</span>
<svg style="position:absolute;left:44.4px;top:1505.0px;" width="21" height="19" viewBox="0 0 21 19" fill="none"><path d="M10.500 0.500L20.500 18.500H0.500z" fill="#9a9ca6"/><path d="M10.500 7v6" stroke="#2a2d32" stroke-width="1.900"/><circle cx="10.500" cy="15.300" r="1.100" fill="#2a2d32"/></svg>
<span id="t76" class="t " style="left:70.5px;top:1498.0px;height:34px;line-height:34px;color:#9a9ca6;font-size:16.5px">0</span>
<svg style="position:absolute;left:89.0px;top:1505.0px;" width="20" height="20" viewBox="0 0 20 20" fill="none"><rect x="0" y="0" width="20" height="13.500" rx="1" fill="#9a9ca6"/><path d="M5 5.500v4M10 5.500v4M15 5.500v4" stroke="#2a2d32" stroke-width="2"/><path d="M4 17.500h12" stroke="#9a9ca6" stroke-width="1.800"/></svg>
<svg style="position:absolute;left:122.0px;top:1504.0px;" width="23" height="22" viewBox="0 0 23 22" fill="none"><path d="M7 9V2l14 8-9 5" stroke="#9a9ca6" stroke-width="1.700" stroke-linejoin="round"/><path d="M3.500 15.500a3.500 3.500 0 0 1 7 0v3a3.500 3.500 0 0 1-7 0zM1 17h2.500M10.500 17H13M1.500 12.500l2.500 1.500M12.500 12.500L10 14M4.500 11.500a2.500 2.500 0 0 1 5 0" stroke="#9a9ca6" stroke-width="1.500"/></svg>
<svg style="position:absolute;left:161.0px;top:1502.0px;" width="23" height="24" viewBox="0 0 23 24" fill="none"><path d="M2 9h14v6.500a5.500 5.500 0 0 1-5.500 5.500h-3A5.500 5.500 0 0 1 2 15.500zM16 10.500h2a3 3 0 0 1 0 6h-2.300M5 2l1.500 3.500M9 2l1.500 3.500M13 2l1.500 3.500" stroke="#9a9ca6" stroke-width="1.700" stroke-linejoin="round"/></svg>
<span id="t77" class="t " style="left:187.6px;top:1498.0px;height:34px;line-height:34px;transform:scaleX(0.8984);transform-origin:0 50%;color:#9a9ca6;font-size:16.5px">Java: Ready</span>
<span id="t78" class="t " style="left:2002.6px;top:1498.0px;height:34px;line-height:34px;color:#9a9ca6;font-size:16.5px">行<span style="letter-spacing:-0.323px"> 3</span>，列<span style="letter-spacing:-0.323px"> 2 (</span>已选择<span style="letter-spacing:-0.323px">1)</span></span>
<span id="t79" class="t " style="left:2169.5px;top:1498.0px;height:34px;line-height:34px;color:#9a9ca6;font-size:16.5px">空格<span style="letter-spacing:-0.620px">: 4</span></span>
<span id="t80" class="t " style="left:2237.8px;top:1498.0px;height:34px;line-height:34px;transform:scaleX(0.9241);transform-origin:0 50%;color:#9a9ca6;font-size:16.5px">UTF-8</span>
<span id="t81" class="t " style="left:2299.7px;top:1498.0px;height:34px;line-height:34px;transform:scaleX(0.7942);transform-origin:0 50%;color:#9a9ca6;font-size:16.5px">LF</span>
<span id="t82" class="t " style="left:2335.0px;top:1498.0px;height:34px;line-height:34px;transform:scaleX(1.2685);transform-origin:0 50%;color:#9a9ca6;font-size:16.5px">{ }</span>
<span id="t83" class="t " style="left:2374.8px;top:1498.0px;height:34px;line-height:34px;transform:scaleX(0.8807);transform-origin:0 50%;color:#9a9ca6;font-size:16.5px">Java</span>
<span id="t84" class="t " style="left:2447.8px;top:1498.0px;height:34px;line-height:34px;transform:scaleX(0.8380);transform-origin:0 50%;color:#9a9ca6;font-size:16.5px">CUE</span>
<svg style="position:absolute;left:2425.5px;top:1507.0px;" width="19" height="16" viewBox="0 0 19 16" fill="none"><path d="M0 8h10M6 3.500l4.500 4.500L6 12.500M14.500 1v14M10.800 3.200l7.400 9.600M18.200 3.200l-7.400 9.600" stroke="#9a9ca6" stroke-width="1.500"/></svg>
<svg style="position:absolute;left:2500.5px;top:1505.0px;" width="19" height="22" viewBox="0 0 19 22" fill="none"><path d="M3 15.500V9a6.500 6.500 0 0 1 13 0v6.500l1.500 2h-16zM7.500 20h4" stroke="#9a9ca6" stroke-width="1.700" stroke-linejoin="round"/></svg>
</div>
</body></html>
